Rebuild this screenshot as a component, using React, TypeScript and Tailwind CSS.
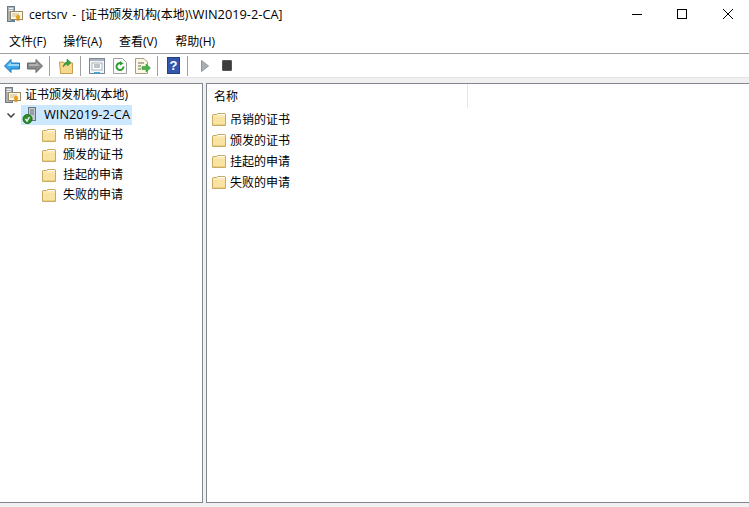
const font = { fontFamily: '"Open Sans", "Noto Sans CJK SC", sans-serif' };

function Folder() {
  return (
    <svg width="14" height="13" viewBox="0 0 14 13" className="shrink-0">
      <path d="M0.5 2 L1 1.5 H4.5 L5.5 0.5 H13 L13.5 1 V12.5 H0.5 Z" fill="#f8e3a2" stroke="#c8aa62" strokeWidth="1" />
      <path d="M6 1.5 H13" stroke="#ffffff" strokeWidth="1" />
      <path d="M1 3 H13" stroke="#fdf1c9" strokeWidth="1" />
      <path d="M1 11.5 H13" stroke="#edcf82" strokeWidth="1" />
    </svg>
  );
}

function CertIcon({ badge }: { badge?: boolean }) {
  return (
    <svg width="16" height="16" viewBox="0 0 16 16">
      <rect x="0.5" y="0.5" width="7" height="15" fill="#a9b1b8" stroke="#6f7a84" />
      <path d="M2 2.5 H6 M2 4.5 H6" stroke="#eef2f5" />
      <rect x="3.5" y="5.5" width="12" height="8" fill="#fff8e6" stroke="#9b8a62" />
      <path d="M5 8 H12 M5 10 H9" stroke="#c7b78d" />
      <circle cx="11" cy="11" r="2.2" fill="#e7a31f" />
      <path d="M10 12.5 L9.5 15.5 L11 14.5 L12.5 15.5 L12 12.5" fill="#d9901a" />
      {badge && <rect x="4" y="14" width="3" height="2" fill="#3a8fc4" />}
    </svg>
  );
}

function ServerIcon() {
  return (
    <svg width="18" height="18" viewBox="0 0 18 18">
      <rect x="7.5" y="1.5" width="7" height="13" fill="#c4cad0" stroke="#68737d" />
      <path d="M9 4 H13 M9 6 H13 M9 8 H13" stroke="#68737d" />
      <circle cx="6.5" cy="13" r="4.5" fill="#2f8f2c" stroke="#1e6a20" />
      <path d="M4.5 13 L6 15 L8.5 11" stroke="#fff" strokeWidth="1.3" fill="none" />
    </svg>
  );
}

function Sep() {
  return <div className="w-px h-[20px] bg-[#a0a0a0] shrink-0" />;
}

function ToolbarIcons() {
  return (
    <div className="h-[23px] flex items-center bg-white pl-[4px] shrink-0">
      <svg width="16" height="14" viewBox="0 0 16 14">
        <path d="M0.5 7 L7 0.5 V4 H15.5 V10 H7 V13.5 Z" fill="#3ba6e8" stroke="#1c75b8" />
        <path d="M3 7 L7 3 V5 H15 V7 Z" fill="#9ad8fa" />
      </svg>
      <svg width="16" height="14" viewBox="0 0 16 14" className="ml-[7px]">
        <path d="M15.5 7 L9 0.5 V4 H0.5 V10 H9 V13.5 Z" fill="#8a8a8a" stroke="#666" />
        <path d="M2 5 H9 V3 L13 7 H2 Z" fill="#b0b0b0" />
      </svg>
      <div className="ml-[6px]"><Sep /></div>
      <svg width="14" height="16" viewBox="0 0 14 16" className="ml-[9px]">
        <path d="M0.5 4 H4 L5 5 H13.5 V15.5 H1.5 Z" fill="#f6d88e" stroke="#c59f4d" />
        <path d="M4 9 C5 5 7 4 8 4 V1 L12 4.5 L8.5 8 V6 C7 6 6 7 4 9 Z" fill="#38a33a" stroke="#23752a" strokeWidth="0.5" />
      </svg>
      <div className="ml-[7px]"><Sep /></div>
      <svg width="16" height="16" viewBox="0 0 16 16" className="ml-[8px]">
        <rect x="0.5" y="0.5" width="15" height="15" fill="#f4f5f7" stroke="#7d8794" />
        <rect x="1" y="1" width="14" height="2" fill="#aab3bf" />
        <rect x="3" y="5" width="10" height="7" fill="#fff" stroke="#a9b2bd" />
        <path d="M5 7 H11 M5 9 H11" stroke="#7d8794" />
        <rect x="5" y="14" width="6" height="1.5" fill="#3da7e0" />
      </svg>
      <svg width="14" height="16" viewBox="0 0 14 16" className="ml-[8px]">
        <path d="M0.5 0.5 H9.5 L13.5 4.5 V15.5 H0.5 Z" fill="#fbfbfb" stroke="#a0a0a0" />
        <path d="M10.5 8.5 A3.5 3.5 0 1 1 8 5.2" fill="none" stroke="#2f9e32" strokeWidth="2" />
        <path d="M7 3 L10.5 5.5 L7 7.5 Z" fill="#2f9e32" />
      </svg>
      <svg width="16" height="16" viewBox="0 0 16 16" className="ml-[8px]">
        <path d="M0.5 0.5 H9 L12.5 4 V15.5 H0.5 Z" fill="#fbf6e2" stroke="#a59e86" />
        <path d="M3 5 H9 M3 8 H6 M3 11 H6" stroke="#6f6a58" />
        <path d="M7 8.5 H11 V6 L15.5 10 L11 14 V11.5 H7 Z" fill="#49b24a" stroke="#2f8a34" strokeWidth="0.5" />
      </svg>
      <div className="ml-[6px]"><Sep /></div>
      <svg width="13" height="17" viewBox="0 0 13 17" className="ml-[9px]">
        <rect x="0.5" y="0.5" width="12" height="16" fill="#3556ad" stroke="#24407f" />
        <text x="6.5" y="13" textAnchor="middle" fontSize="13" fontWeight="700" fill="#fff" fontFamily="Liberation Sans">?</text>
      </svg>
      <div className="ml-[7px]"><Sep /></div>
      <svg width="8" height="12" viewBox="0 0 8 12" className="ml-[13px]">
        <path d="M0.5 0.5 L7.5 6 L0.5 11.5 Z" fill="#a8aeb4" stroke="#8e959c" />
      </svg>
      <div className="ml-[13px] w-[10px] h-[11px] rounded-[1px] bg-[#3c3c3c] border border-[#555]" />
    </div>
  );
}

const items = ["吊销的证书", "颁发的证书", "挂起的申请", "失败的申请"];
const menus = ["文件(F)", "操作(A)", "查看(V)", "帮助(H)"];

export default function App() {
  return (
    <div className="w-[749px] h-[507px] overflow-hidden bg-[#f0f0f0] flex flex-col text-[12px] text-black" style={font}>
      {/* title bar */}
      <div className="h-[30px] bg-white flex items-center shrink-0">
        <div className="ml-[7px] mr-[6px] mb-[2px] flex"><CertIcon badge /></div>
        <span className="whitespace-nowrap">
          certsrv
          <span className="ml-[5px] mr-[5px]">-</span>
          [证书颁发机构(本地)\<span className="text-[12.8px]">WIN2019-2-CA</span>]
        </span>
        <div className="ml-auto flex items-center pb-[2px] pr-[16px]">
          <div className="w-[10px] h-px bg-black mr-[35px]" />
          <div className="w-[10px] h-[10px] border border-black mr-[36px]" />
          <svg width="10" height="10" viewBox="0 0 10 10">
            <path d="M0 0 L10 10 M10 0 L0 10" stroke="#000" strokeWidth="1" />
          </svg>
        </div>
      </div>
      {/* menu */}
      <div className="h-[23px] bg-white flex items-center pl-[9px] border-b border-[#a0a0a0] shrink-0 box-content">
        <span>{menus[0]}</span>
        <span className="ml-[17px]">{menus[1]}</span>
        <span className="ml-[17px]">{menus[2]}</span>
        <span className="ml-[18px]">{menus[3]}</span>
      </div>
      <ToolbarIcons />
      <div className="h-px bg-[#e3e3e3] shrink-0" />
      {/* panes */}
      <div className="flex mt-[5px] h-[420px] gap-[3px] shrink-0">
        <div className="w-[203px] bg-white border border-[#82878f] border-l-0">
          <div className="flex items-center h-[20px] mt-[1px] pl-[5px]">
            <CertIcon />
            <span className="ml-[4px]">证书颁发机构(本地)</span>
          </div>
          <div className="flex items-center h-[20px] pl-[7px]">
            <svg width="8" height="5" viewBox="0 0 8 5">
              <path d="M0.5 0.5 L4 4 L7.5 0.5" fill="none" stroke="#404040" strokeWidth="1.5" />
            </svg>
            <div className="ml-[6px] flex items-center h-[20px] bg-[#cce8ff] w-[111px]">
              <ServerIcon />
              <span className="ml-[5px] text-[12.8px] whitespace-nowrap">WIN2019-2-CA</span>
            </div>
          </div>
          {items.map((t) => (
            <div key={t} className="flex items-center h-[20px] pl-[42px]">
              <Folder />
              <span className="ml-[7px]">{t}</span>
            </div>
          ))}
        </div>
        <div className="flex-1 bg-white border border-[#82878f] border-r-0">
          <div className="h-[24px] w-[261px] flex items-center pl-[7px] pt-[2px] border-r border-[#e5e5e5]">名称</div>
          <div className="mt-[1px]">
            {items.map((t) => (
              <div key={t} className="flex items-center h-[21px] pl-[5px]">
                <Folder />
                <span className="ml-[4px]">{t}</span>
              </div>
            ))}
          </div>
        </div>
      </div>
    </div>
  );
}
